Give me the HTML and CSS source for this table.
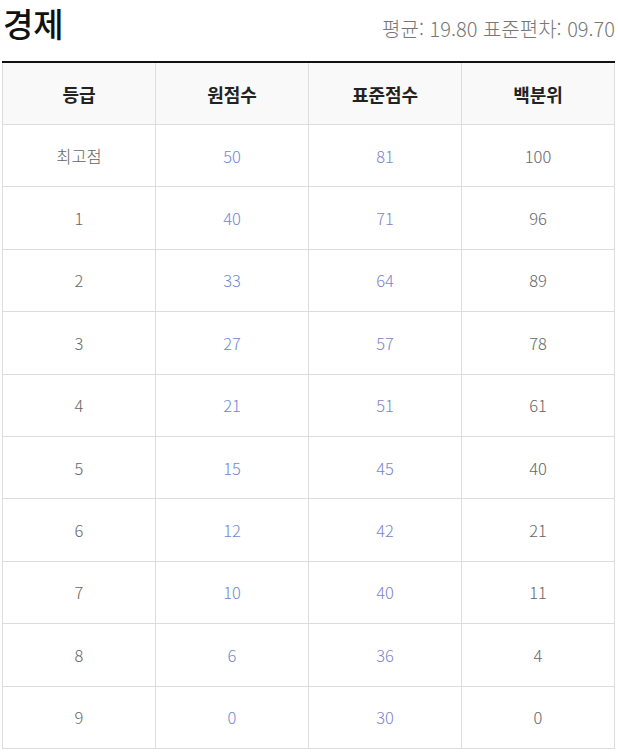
FILE: index.html
```html
<!DOCTYPE html>
<html lang="ko">
<head>
<meta charset="utf-8">
<link rel="stylesheet" href="styles.css">
</head>
<body>
<div class="wrap">
  <div class="head">
    <h2 class="title">경제</h2>
    <div class="stats">평균: 19.80 표준편차: 09.70</div>
  </div>
  <table class="grade">
    <thead>
      <tr><th>등급</th><th>원점수</th><th>표준점수</th><th>백분위</th></tr>
    </thead>
    <tbody>
      <tr><td>최고점</td><td class="raw">50</td><td class="std">81</td><td>100</td></tr>
      <tr><td>1</td><td class="raw">40</td><td class="std">71</td><td>96</td></tr>
      <tr><td>2</td><td class="raw">33</td><td class="std">64</td><td>89</td></tr>
      <tr><td>3</td><td class="raw">27</td><td class="std">57</td><td>78</td></tr>
      <tr><td>4</td><td class="raw">21</td><td class="std">51</td><td>61</td></tr>
      <tr><td>5</td><td class="raw">15</td><td class="std">45</td><td>40</td></tr>
      <tr><td>6</td><td class="raw">12</td><td class="std">42</td><td>21</td></tr>
      <tr><td>7</td><td class="raw">10</td><td class="std">40</td><td>11</td></tr>
      <tr><td>8</td><td class="raw">6</td><td class="std">36</td><td>4</td></tr>
      <tr><td>9</td><td class="raw">0</td><td class="std">30</td><td>0</td></tr>
    </tbody>
  </table>
</div>
</body>
</html>
```

FILE: styles.css
```css
html, body {
  margin: 0;
  padding: 0;
  background: #fff;
}
body {
  font-family: "Noto Sans CJK KR", "Noto Sans", sans-serif;
  color: #666;
}
.wrap {
  padding: 0 3px 0 2px;
}
.head {
  display: flex;
  justify-content: space-between;
  align-items: flex-start;
  height: 61px;
}
.title {
  margin: 0;
  font-size: 33px;
  font-weight: 500;
  color: #111;
  line-height: 46px;
  padding-left: 1px;
}
.stats {
  margin-top: 14px;
  font-size: 20px;
  font-weight: 300;
  color: #777;
  line-height: 30px;
}
.grade {
  width: 100%;
  border-collapse: collapse;
  table-layout: fixed;
}
.grade th, .grade td {
  border: 1px solid #ddd;
  text-align: center;
  padding: 0;
}
.grade th {
  height: 61px;
  background: #f9f9f9;
  font-size: 18px;
  font-weight: 700;
  color: #222;
}
.grade thead th {
  border-top: 2px solid #111;
}
.grade td {
  height: 61.4px;
  font-size: 16.5px;
  font-weight: 300;
  color: #666;
}
.grade td.raw {
  color: #6f88d8;
}
.grade td.std {
  color: #7d84cc;
}
```
